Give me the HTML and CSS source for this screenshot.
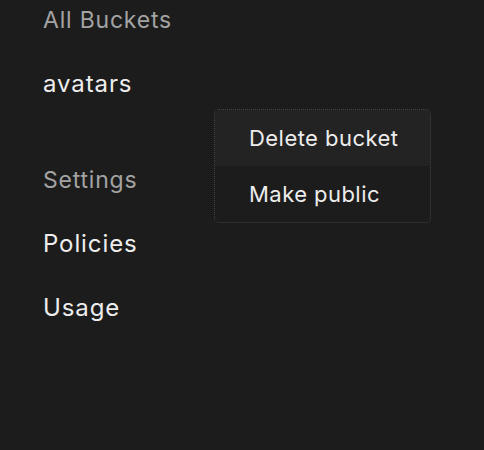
FILE: index.html
```html
<!DOCTYPE html>
<html>
<head>
<meta charset="utf-8">
<link rel="stylesheet" href="styles.css">
</head>
<body>
<nav class="sidebar">
  <section class="group">
    <div class="heading">All Buckets</div>
    <div class="item">avatars</div>
  </section>
  <section class="group">
    <div class="heading">Settings</div>
    <div class="item">Policies</div>
    <div class="item">Usage</div>
  </section>
</nav>
<div class="menu">
  <div class="menu-item active">Delete bucket</div>
  <div class="menu-item">Make public</div>
</div>
</body>
</html>
```
FILE: styles.css
```css
html, body {
  margin: 0;
  padding: 0;
  background: #1c1c1c;
  width: 484px;
  height: 450px;
  overflow: hidden;
  font-family: Inter, "Noto Sans", sans-serif;
  font-size: 22px;
}
.sidebar {
  display: flex;
  flex-direction: column;
  gap: 56px;
  padding-left: 43px;
}
.group {
  display: flex;
  flex-direction: column;
  gap: 24px;
}
.heading, .item {
  line-height: 40px;
  height: 40px;
}
.heading {
  color: #a3a3a3;
  font-size: 23px;
  letter-spacing: 0.8px;
}
.item {
  color: #ededed;
  font-size: 24px;
  letter-spacing: 0.9px;
}
.menu {
  position: absolute;
  left: 214px;
  top: 109px;
  width: 215px;
  border: 1px dotted #444;
  border-radius: 5px;
  background: #1c1c1c;
  overflow: hidden;
}
.menu-item {
  height: 56px;
  line-height: 56px;
  padding-left: 34px;
  color: #ededed;
  letter-spacing: 0.45px;
}
.menu-item.active { background: #232323; }
```
